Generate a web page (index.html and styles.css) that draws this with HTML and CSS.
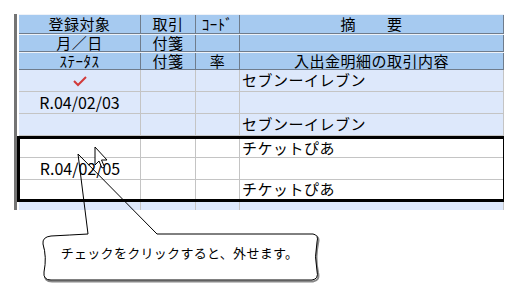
FILE: index.html
```html
<!DOCTYPE html>
<html>
  <head>
    <title>入出金明細</title>
    <link rel="stylesheet" href="styles.css">
  </head>
<body>
  <div class="sheet">
    <div class="row head first">
      <div class="cell">登録対象</div>
      <div class="cell">取引</div>
      <div class="cell">ｺｰﾄﾞ</div>
      <div class="cell">摘　　要</div>
    </div>
    <div class="row head">
      <div class="cell">月／日</div>
      <div class="cell">付箋</div>
      <div class="cell"></div>
      <div class="cell"></div>
    </div>
    <div class="row head">
      <div class="cell">ｽﾃｰﾀｽ</div>
      <div class="cell">付箋</div>
      <div class="cell">率</div>
      <div class="cell">入出金明細の取引内容</div>
    </div>

    <div class="row data">
      <div class="cell center">
        <svg class="check" width="16" height="12" viewBox="0 0 16 12">
          <path d="M2 6 L6 10 L14 2" fill="none" stroke="#d23a3a" stroke-width="2"/>
        </svg>
      </div>
      <div class="cell"></div>
      <div class="cell"></div>
      <div class="cell text">セブンーイレブン</div>
    </div>
    <div class="row data">
      <div class="cell center date">R.04/02/03</div>
      <div class="cell"></div>
      <div class="cell"></div>
      <div class="cell"></div>
    </div>
    <div class="row data">
      <div class="cell"></div>
      <div class="cell"></div>
      <div class="cell"></div>
      <div class="cell text">セブンーイレブン</div>
    </div>

    <div class="group">
      <div class="row gr short">
        <div class="cell"></div>
        <div class="cell"></div>
        <div class="cell"></div>
        <div class="cell text">チケットぴあ</div>
      </div>
      <div class="row gr">
        <div class="cell center date">R.04/02/05</div>
        <div class="cell"></div>
        <div class="cell"></div>
        <div class="cell"></div>
      </div>
      <div class="row gr short last">
        <div class="cell"></div>
        <div class="cell"></div>
        <div class="cell"></div>
        <div class="cell text">チケットぴあ</div>
      </div>
    </div>

    <div class="row data">
      <div class="cell"></div>
      <div class="cell"></div>
      <div class="cell"></div>
      <div class="cell"></div>
    </div>
  </div>

  <div class="callout">
    <svg class="callout-art" width="523" height="284" viewBox="0 0 523 284">
      <path d="M88 234 L313 234 Q319 235 317 242 Q314 257 317 271 Q319 279 312 280 L51 280 Q43 280 44 272 Q47 257 43 244 Q42 237 51 236 Q70 235 88 234 Z"
        fill="none" stroke="#888" stroke-width="2" transform="translate(1 1.5)"/>
      <path d="M88 234 L313 234 Q319 235 317 242 Q314 257 317 271 Q319 279 312 280 L51 280 Q43 280 44 272 Q47 257 43 244 Q42 237 51 236 Q70 235 88 234 Z"
        fill="#fff" stroke="none"/>
      <path d="M157 234 L313 234 Q319 235 317 242 Q314 257 317 271 Q319 279 312 280 L51 280 Q43 280 44 272 Q47 257 43 244 Q42 237 51 236 Q70 235 88 234 L78 154 L157 234"
        fill="none" stroke="#000" stroke-width="1"/>
      <path d="M95 147 v18 l4 -4 l3 7 l2.5 -1 l-3 -7 h5.5 z" fill="#fff" stroke="#000" stroke-width="1"/>
    </svg>
    <div class="callout-text">チェックをクリックすると、外せます。</div>
  </div>
</body>
</html>
```

FILE: styles.css
```css
body{
  margin: 0;
  background-color: white;
  font-family: "Noto Sans CJK JP", sans-serif;
  color: black;
}
.sheet{
  margin-top: 14px;
  margin-left: 14px;
  width: 490px;
  height: 196px;
  overflow: hidden;
  border-left: 3px solid #747474;
  padding-left: 2px;
  box-sizing: border-box;
}
.row{
  display: grid;
  grid-template-columns: 122px 55px 44px 264px;
  box-sizing: border-box;
}
.cell{
  box-sizing: border-box;
  border-right: 1px solid #c4c4c4;
  font-size: 15px;
  white-space: nowrap;
}
.head{
  background-color: #a6caf0;
  border-top: 1px solid #eef2f8;
  border-bottom: 1px solid #6f7c8c;
  height: 18px;
}
.head.first{
  height: 20px;
}
.head .cell{
  border-right-color: #6f7c8c;
  text-align: center;
  line-height: 16px;
  letter-spacing: 0.5px;
}
.head.first .cell{
  line-height: 18px;
}
.data{
  background-color: #dde8fb;
  border-bottom: 1px solid #c4c4c4;
  height: 22px;
}
.cell.center{
  text-align: center;
}
.cell.text{
  padding-left: 2px;
  line-height: 20px;
  letter-spacing: 0.5px;
}
.date{
  line-height: 21px;
  font-size: 16px;
}
.check{
  margin-top: 3px;
}
.group{
  border: 3px solid black;
  margin-left: -2px;
  margin-right: -2px;
  background-color: white;
}
.gr{
  grid-template-columns: 121px 55px 44px 1fr;
  border-bottom: 1px solid #c4c4c4;
  height: 22px;
}
.gr.short{
  height: 19px;
}
.gr.short .text{
  line-height: 18px;
}
.gr.last{
  border-bottom: none;
}
.gr .cell:last-child{
  border-right: none;
}
.callout{
  position: absolute;
  left: 0;
  top: 0;
  width: 523px;
  height: 284px;
  padding: 234px 0 0 43px;
  box-sizing: border-box;
  pointer-events: none;
}
.callout-art{
  position: absolute;
  left: 0;
  top: 0;
}
.callout-text{
  position: relative;
  width: 273px;
  height: 36px;
  display: flex;
  align-items: center;
  justify-content: center;
  font-size: 13px;
  letter-spacing: 0.3px;
}
```
